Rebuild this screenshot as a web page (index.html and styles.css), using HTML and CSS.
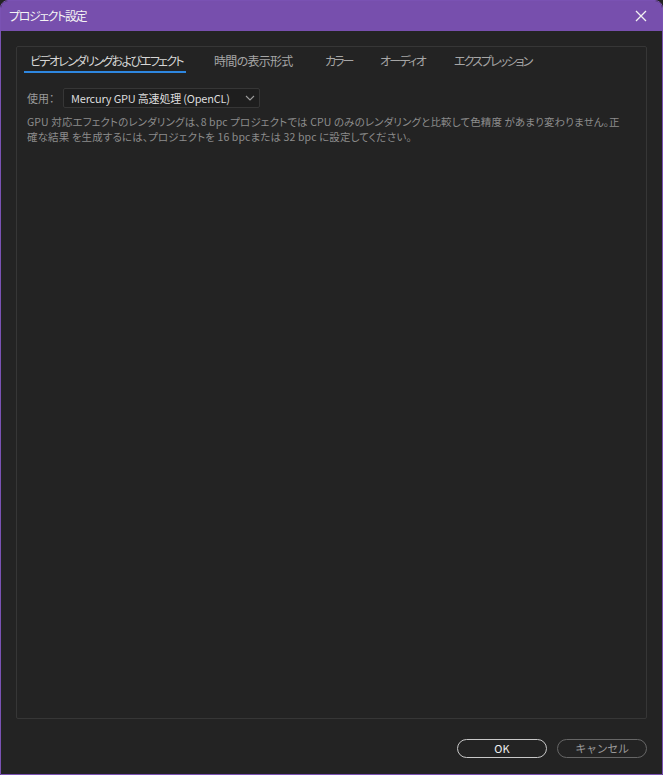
FILE: index.html
```html
<!DOCTYPE html>
<html lang="ja">
<head>
<meta charset="utf-8">
<link rel="stylesheet" href="styles.css">
</head>
<body>
<div class="window">
  <div class="titlebar">
    <span class="title">プロジェクト設定</span>
    <svg class="close" width="12" height="12" viewBox="0 0 12 12"><path d="M1 1L11 11M11 1L1 11" stroke="#f2f2f2" stroke-width="1.3" fill="none"/></svg>
  </div>
  <div class="content">
    <div class="panel">
      <div class="tabs">
        <span class="tab active">ビデオレンダリングおよびエフェクト</span>
        <span class="tab t2">時間の表示形式</span>
        <span class="tab t3">カラー</span>
        <span class="tab t4">オーディオ</span>
        <span class="tab t5">エクスプレッション</span>
      </div>
      <div class="row">
        <span class="label">使用：</span>
        <div class="select">
          <span class="select-text">Mercury GPU 高速処理 (OpenCL)</span>
          <svg class="chev" width="10" height="6" viewBox="0 0 10 6"><path d="M1 1L5 5L9 1" stroke="#9a9a9a" stroke-width="1.1" fill="none"/></svg>
        </div>
      </div>
      <div class="desc">
        <div class="line">GPU 対応エフェクトのレンダリングは、8 bpc プロジェクトでは CPU のみのレンダリングと比較して色精度 があまり変わりません。正</div>
        <div class="line">確な結果 を生成するには、プロジェクトを 16 bpcまたは 32 bpc に設定してください。</div>
      </div>
    </div>
    <div class="buttons">
      <button class="btn ok">OK</button>
      <button class="btn cancel">キャンセル</button>
    </div>
  </div>
</div>
</body>
</html>
```
FILE: styles.css
```css
* { box-sizing: border-box; }
html, body { margin: 0; padding: 0; background: #232323; }
body {
  width: 663px;
  height: 775px;
  font-family: "Noto Sans CJK JP", "Open Sans", sans-serif;
  font-feature-settings: "palt";
}
.window {
  width: 663px;
  height: 775px;
  background: #232323;
  border: 1px solid #7a52b3;
  border-radius: 8px 8px 0 0;
  display: flex;
  flex-direction: column;
  overflow: hidden;
}
.titlebar {
  height: 30px;
  background: #774fad;
  display: flex;
  align-items: center;
  justify-content: space-between;
  padding: 0 15px 0 8px;
  flex-shrink: 0;
}
.title {
  color: #f4f4f4;
  font-size: 12px;
  line-height: 14px;
  letter-spacing: -1.4px;
}
.close { display: block; }
.content {
  flex: 1;
  display: flex;
  flex-direction: column;
  padding: 15px 15px 17px 15px;
}
.panel {
  height: 673px;
  border: 1px solid #363636;
  border-radius: 2px;
  padding: 0 0 0 10px;
}
.tabs {
  display: flex;
  height: 25px;
  margin-top: 4px;
  white-space: nowrap;
}
.tab {
  font-size: 12px;
  line-height: 20px;
  color: #a6a6a6;
  letter-spacing: -1.7px;
  flex-shrink: 0;
}
.tab.active {
  color: #d6d6d6;
  width: 162px;
  padding-left: 6px;
  border-bottom: 2px solid #2e87e0;
  height: 22px;
  margin-left: -3px;
}
.t2 { margin-left: 28px; width: 83px; letter-spacing: -0.7px; }
.t3 { margin-left: 28px; width: 27px; letter-spacing: -1.9px; }
.t4 { margin-left: 28px; width: 46px; }
.t5 { margin-left: 28px; letter-spacing: -1.9px; }
.row {
  display: flex;
  align-items: center;
  margin-top: 12px;
  height: 20px;
}
.label {
  font-size: 11px;
  color: #9a9a9a;
  width: 36px;
}
.select {
  width: 197px;
  height: 20px;
  border: 1px solid #363636;
  background: #1e1e1e;
  border-radius: 2px;
  display: flex;
  align-items: center;
  justify-content: space-between;
  padding: 0 4px 0 7px;
}
.select-text {
  font-size: 11px;
  color: #dcdcdc;
  line-height: 14px;
  letter-spacing: -0.2px;
}
.desc {
  margin-top: 6px;
  display: flex;
  flex-direction: column;
}
.line {
  font-size: 10.5px;
  line-height: 15px;
  height: 15px;
  color: #8c8c8c;
  white-space: nowrap;
  letter-spacing: 0.12px;
}
.buttons {
  display: flex;
  justify-content: flex-end;
  gap: 10px;
  margin-top: 20px;
}
.btn {
  width: 90px;
  height: 19px;
  border-radius: 10px;
  background: transparent;
  font-family: "Noto Sans CJK JP", "Open Sans", sans-serif;
  font-size: 11px;
  line-height: 15px;
  padding: 0;
}
.ok {
  border: 1.5px solid #c8c8c8;
  color: #f0f0f0;
}
.cancel {
  border: 1.5px solid #666666;
  color: #9a9a9a;
  letter-spacing: -0.3px;
}
```
